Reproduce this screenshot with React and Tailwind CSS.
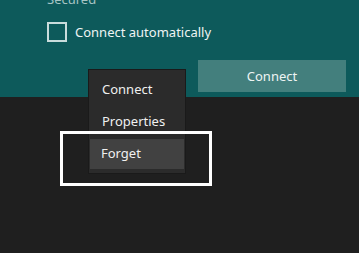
import React from 'react';

const App = () => {
    return (
        <div className="relative w-[359px] h-[253px] overflow-hidden bg-[#1f1f1f] font-['Noto_Sans',sans-serif]">
            {/* Network panel */}
            <div className="h-[106px] bg-[#0d5a5b] pl-[47px] pr-[13px]">
                <div className="h-[8px] -mt-[9px] text-[13px] leading-[17px] text-[#a7c4c4]">Secured</div>
                <div className="mt-[23px] flex items-center gap-[8px]">
                    <div className="w-[20px] h-[20px] border-2 border-[#c9dcdc]" />
                    <span className="text-[13px] text-[#eef4f4] leading-[20px]">Connect automatically</span>
                </div>
                <div className="mt-[18px] flex justify-end">
                    <button className="w-[148px] h-[32px] pt-[1px] bg-[#437f7d] text-[13px] text-[#eef4f4]">Connect</button>
                </div>
            </div>

            {/* Context menu */}
            <div className="absolute left-[88px] top-[69px] w-[98px] h-[105px] bg-[#2b2b2b] border border-[#1a1a1a] pt-[4px] px-[1px]">
                <div className="h-[32px] flex items-center pl-[12px] text-[13px] text-[#f0f0f0]">Connect</div>
                <div className="h-[32px] flex items-center pl-[12px] text-[13px] text-[#f0f0f0]">Properties</div>
                <div className="h-[30px] mt-[1px] flex items-center pl-[11px] text-[13px] text-[#f0f0f0] bg-[#414141]">Forget</div>
            </div>

            {/* Highlight box */}
            <div className="absolute left-[60px] top-[131px] w-[152px] h-[55px] border-[3px] border-white" />
        </div>
    );
};

export default App;
